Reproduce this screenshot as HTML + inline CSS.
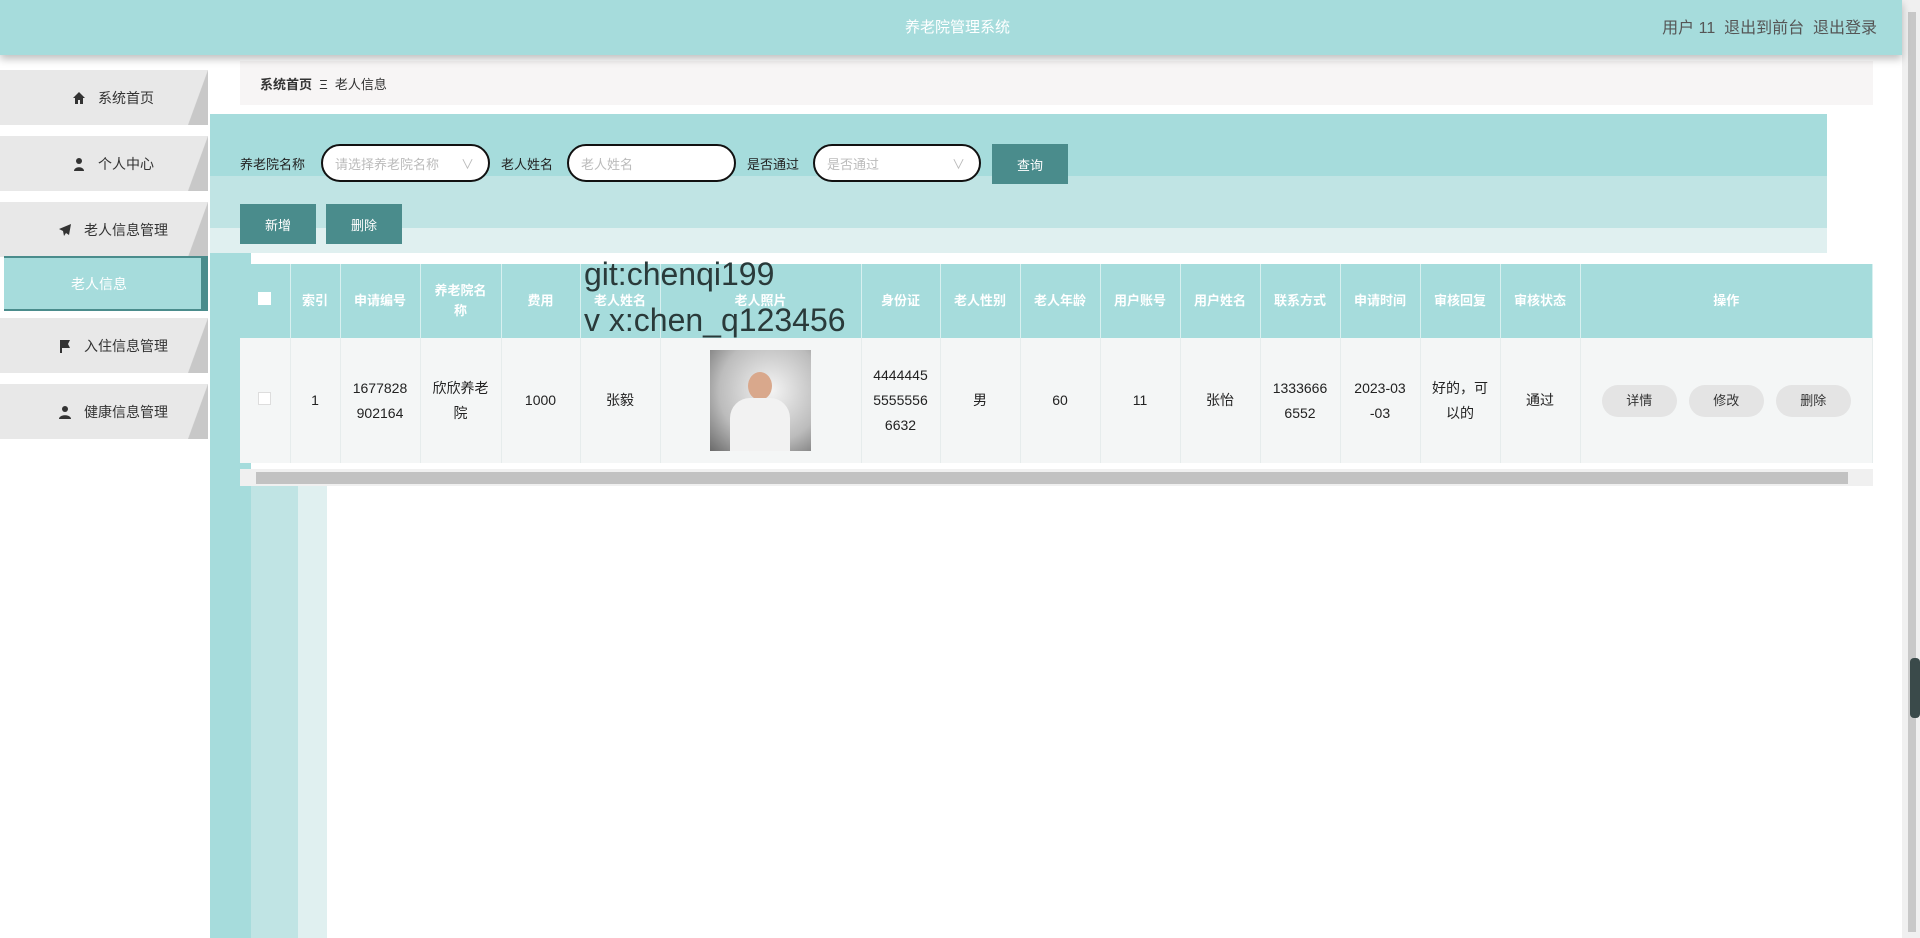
<!DOCTYPE html>
<html><head><meta charset="utf-8"><style>
*{box-sizing:border-box;margin:0;padding:0}
body{width:1920px;height:938px;overflow:hidden;background:#fff;font-family:"Liberation Sans","Noto Sans CJK SC",sans-serif;position:relative;font-size:14px;color:#333}
.a{position:absolute}
.hdr{left:0;top:0;width:1902px;height:55px;background:#a6dcdc;box-shadow:0 4px 8px rgba(0,0,0,.25);z-index:5}
.nav{left:0;width:208px;height:55px;background:#e8e8e8;display:flex;align-items:center;justify-content:center;font-size:14px;color:#333;padding-left:18px}
.nav:after{content:"";position:absolute;right:0;top:0;width:20px;height:55px;background:linear-gradient(to bottom right,#e8e8e8 49%,#c8c8c8 51%)}
.nav svg{margin-right:12px}
th,td{text-align:center;vertical-align:middle;border-right:1px solid #e6ecec}
th{color:#fff;font-weight:bold;font-size:13px;background:#a6dcdc;height:74px;border-right:1px solid #d8f0f0;line-height:20px}
td{height:125px;background:#f4f6f6;font-size:14px;line-height:25px;color:#222}
.btn{background:#4a8c8c;color:#fff;display:flex;align-items:center;justify-content:center;font-size:13px}
.inp{border:2px solid #111;border-radius:20px;background:#fff;height:38px;color:#bbb;font-size:13px;padding-left:12px;display:flex;align-items:center}
.ob{background:#e4e4e4;border-radius:16px;width:75px;height:32px;display:flex;align-items:center;justify-content:center;font-size:13px;color:#333}
</style></head><body>
<div class="a hdr">
 <div class="a" style="left:0;width:1915px;top:16px;text-align:center;color:#fff;font-size:15px">养老院管理系统</div>
 <div class="a" style="right:25px;top:14px;color:#555;font-size:16px">用户 11 &nbsp;退出到前台 &nbsp;退出登录</div>
</div>
<div class="a" style="left:1902px;top:0;width:18px;height:938px;background:#f0f0f0"></div>
<div class="a" style="left:1908px;top:12px;width:8px;height:920px;background:#c8c8c8"></div>
<div class="a" style="left:1910px;top:658px;width:10px;height:60px;background:#3a4a4a;border-radius:4px"></div>

<div class="a nav" style="top:70px"><svg width="14" height="14" viewBox="0 0 14 14"><path d="M7 1L1 7h2v6h3V9h2v4h3V7h2z" fill="#333"/></svg>系统首页</div>
<div class="a nav" style="top:136px"><svg width="14" height="14" viewBox="0 0 14 14"><circle cx="7" cy="4" r="3" fill="#333"/><path d="M2 14c0-5 10-5 10 0z" fill="#333"/></svg>个人中心</div>
<div class="a nav" style="top:202px"><svg width="14" height="14" viewBox="0 0 14 14"><path d="M13 1L1 6l4 2 1 5 2-3 3 2z" fill="#333"/></svg>老人信息管理</div>
<div class="a" style="left:4px;top:256px;width:204px;height:55px;background:#a6dcdc;border-right:7px solid #4a8c8c;border-top:2px solid #4a8c8c;border-bottom:2px solid #4a8c8c;color:#fff;font-size:14px;display:flex;align-items:center;padding-left:67px">老人信息</div>
<div class="a nav" style="top:318px"><svg width="14" height="14" viewBox="0 0 14 14"><path d="M2 1v13h2V9h8l-2-4 2-4z" fill="#333"/></svg>入住信息管理</div>
<div class="a nav" style="top:384px"><svg width="14" height="14" viewBox="0 0 14 14"><circle cx="7" cy="4" r="3" fill="#333"/><path d="M1 14c0-5 12-5 12 0z" fill="#333"/></svg>健康信息管理</div>

<div class="a" style="left:210px;top:114px;width:41px;height:824px;background:#a6dcdc"></div>
<div class="a" style="left:251px;top:486px;width:47px;height:452px;background:#c0e4e4"></div>
<div class="a" style="left:298px;top:486px;width:29px;height:452px;background:#e0f0f0"></div>

<div class="a" style="left:240px;top:61px;width:1633px;height:44px;background:#f7f5f5;font-size:13px;display:flex;align-items:center;padding-left:20px"><b>系统首页</b>&nbsp; Ξ &nbsp;老人信息</div>

<div class="a" style="left:210px;top:114px;width:1617px;height:62px;background:#a6dcdc"></div>
<div class="a" style="left:210px;top:176px;width:1617px;height:52px;background:#c0e4e4"></div>
<div class="a" style="left:210px;top:228px;width:1617px;height:25px;background:#e0f0f0"></div>

<div class="a" style="left:240px;top:154px;font-size:13px;color:#222">养老院名称</div>
<div class="a inp" style="left:321px;top:144px;width:169px">请选择养老院名称<span style="position:absolute;right:14px;color:#bbb">∨</span></div>
<div class="a" style="left:501px;top:154px;font-size:13px;color:#222">老人姓名</div>
<div class="a inp" style="left:567px;top:144px;width:169px">老人姓名</div>
<div class="a" style="left:747px;top:154px;font-size:13px;color:#222">是否通过</div>
<div class="a inp" style="left:813px;top:144px;width:168px">是否通过<span style="position:absolute;right:14px;color:#bbb">∨</span></div>
<div class="a btn" style="left:992px;top:144px;width:76px;height:40px">查询</div>
<div class="a btn" style="left:240px;top:204px;width:76px;height:40px">新增</div>
<div class="a btn" style="left:326px;top:204px;width:76px;height:40px">删除</div>

<table class="a" style="left:240px;top:264px;width:1633px;border-collapse:collapse;table-layout:fixed">
<colgroup><col style="width:50px"><col style="width:50px"><col style="width:80px"><col style="width:81px"><col style="width:79px"><col style="width:80px"><col style="width:201px"><col style="width:79px"><col style="width:80px"><col style="width:80px"><col style="width:80px"><col style="width:80px"><col style="width:80px"><col style="width:80px"><col style="width:80px"><col style="width:80px"><col></colgroup>
<tr><th><span style="display:inline-block;width:13px;height:13px;background:#fff"></span></th><th>索引</th><th>申请编号</th><th>养老院名<br>称</th><th>费用</th><th>老人姓名</th><th>老人照片</th><th>身份证</th><th>老人性别</th><th>老人年龄</th><th>用户账号</th><th>用户姓名</th><th>联系方式</th><th>申请时间</th><th>审核回复</th><th>审核状态</th><th>操作</th></tr>
<tr><td><span style="display:inline-block;width:13px;height:13px;background:#fff;border:1px solid #ddd"></span></td><td>1</td><td>1677828<br>902164</td><td>欣欣养老<br>院</td><td>1000</td><td>张毅</td>
<td><div style="width:101px;height:101px;margin:auto;background:radial-gradient(circle at 60% 40%,#f4f4f4,#bcbcbc 60%,#6a6a6a);position:relative;overflow:hidden"><div style="position:absolute;left:38px;top:22px;width:24px;height:28px;border-radius:50%;background:#d9a88c"></div><div style="position:absolute;left:20px;top:48px;width:60px;height:60px;border-radius:20px 20px 0 0;background:#f2f2f2"></div></div></td>
<td>4444445<br>5555556<br>6632</td><td>男</td><td>60</td><td>11</td><td>张怡</td><td>1333666<br>6552</td><td>2023-03<br>-03</td><td>好的，可<br>以的</td><td>通过</td>
<td><div style="display:flex;justify-content:center;gap:12px"><div class="ob">详情</div><div class="ob">修改</div><div class="ob">删除</div></div></td></tr>
</table>
<div class="a" style="left:240px;top:469px;width:1633px;height:17px;background:#f0f0f0"></div>
<div class="a" style="left:256px;top:472px;width:1592px;height:12px;background:#c2c2c2"></div>

<div class="a" style="left:584px;top:256px;font-size:32px;color:#2a3a3a;line-height:36px">git:chenqi199</div>
<div class="a" style="left:584px;top:302px;font-size:32px;color:#2a3a3a;line-height:36px">v x:chen_q123456</div>
</body></html>
